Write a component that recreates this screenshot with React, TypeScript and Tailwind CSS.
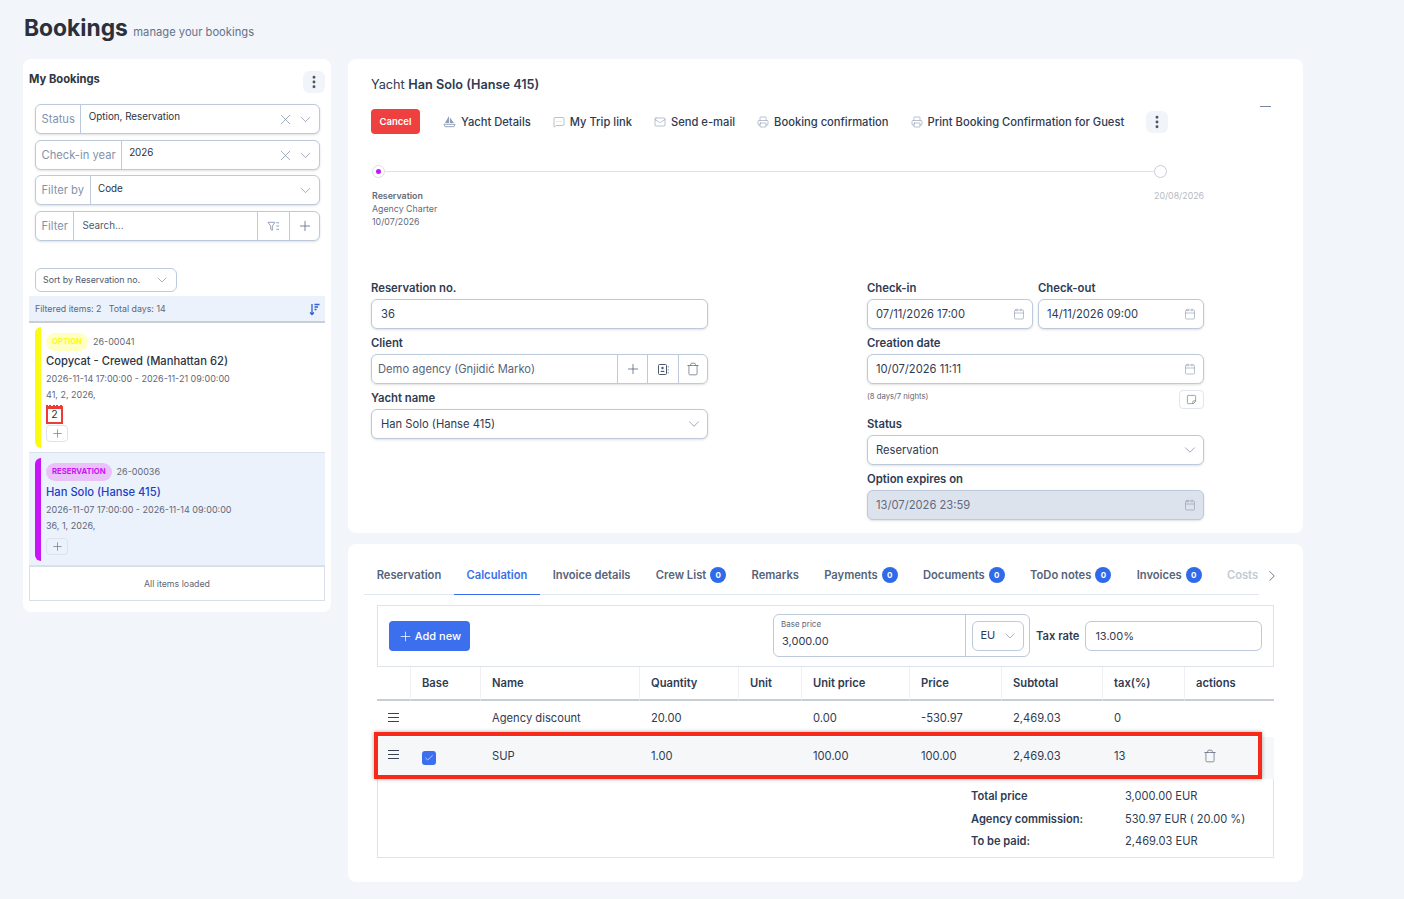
import React from "react";
import {
  Calendar,
  Check,
  ChevronDown,
  ChevronRight,
  EllipsisVertical,
  Mail,
  MessageSquareMore,
  Plus,
  Printer,
  StickyNote,
  Trash,
  X,
} from "lucide-react";

const Kebab = () => (
  <button className="flex h-[22px] w-[22px] items-center justify-center rounded-md bg-[#f1f4f8] text-[#4b5563]">
    <EllipsisVertical size={16} strokeWidth={2.4} />
  </button>
);

const SailIcon = () => (
  <svg width="13" height="13" viewBox="0 0 14 14" fill="#8f9cb5">
    <path d="M6.4 1 L6.4 8.6 L2.2 8.6 Z" />
    <path d="M7.4 2.8 L11.8 8.6 L7.4 8.6 Z" />
    <path d="M1 10 H13 L11.8 12.6 H2.2 Z" fill="none" stroke="#8f9cb5" strokeWidth="1" />
  </svg>
);

const FilterListIcon = () => (
  <svg width="13" height="13" viewBox="0 0 14 14" fill="none" stroke="#8f9cb5" strokeWidth="1">
    <path d="M1 2.5 H8.5 L5.8 6.5 V11 L4 10 V6.5 Z" />
    <path d="M10 3 H13 M10 6.5 H13 M10 10 H13" />
  </svg>
);

const SortIcon = () => (
  <svg width="11" height="13" viewBox="0 0 11 13" fill="none" stroke="#2f5fd0" strokeWidth="1.3">
    <path d="M3 1 V11.5 M1 9.5 L3 11.5 L5 9.5" />
    <path d="M5.5 1.5 H10.5 M5.5 4 H9 M5.5 6.5 H7.5" />
  </svg>
);

const ContactIcon = () => (
  <svg width="13" height="13" viewBox="0 0 13 13" fill="none" stroke="#4d586d" strokeWidth="1">
    <rect x="1.5" y="1.5" width="8" height="10" rx="1" />
    <circle cx="5.5" cy="5" r="1.2" fill="#4d586d" stroke="none" />
    <path d="M3.3 9 C3.6 7.2 7.4 7.2 7.7 9 Z" fill="#4d586d" stroke="none" />
    <path d="M11.2 3 V4.5 M11.2 6 V7.5 M11.2 9 V10.5" stroke="#8b98ae" />
  </svg>
);

const HandleIcon = () => (
  <svg width="11" height="9" viewBox="0 0 11 9" fill="none" stroke="#3a4354" strokeWidth="1">
    <path d="M0 .5 H11 M0 4.5 H11 M0 8.5 H11" />
  </svg>
);

// red calendar badge, the teeth sit on the top edge
const CalendarCount = ({ n }: { n: number }) => (
  <div className="relative mt-[4px] flex h-[18px] w-[17px] items-center justify-center border-2 border-t-[3px] border-[#ef3b36] text-[10.5px] leading-none text-[#2b3445]">
    {n}
    <span className="absolute left-[-2px] right-[-2px] top-[-4px] h-[2px] bg-[repeating-linear-gradient(90deg,#ef3b36_0_2px,transparent_2px_3.4px)]" />
  </div>
);

const FilterRow = ({
  label,
  value,
  clear,
  valueClass,
  className = "",
}: {
  label: string;
  value: string;
  clear?: boolean;
  valueClass: string;
  className?: string;
}) => (
  <div className={`flex h-[30px] items-stretch rounded-md border border-[#bccadb] bg-white shadow-sm ${className}`}>
    <span className="flex items-center border-r border-[#bccadb] px-[5.5px] text-[11.2px] text-[#8392ab]">{label}</span>
    <span className={`flex-1 pt-[5px] text-[9.8px] text-[#2b3445] ${valueClass}`}>{value}</span>
    {clear && <X size={17} strokeWidth={1} className="mr-[3px] self-center text-[#7f8ca3]" />}
    <ChevronDown size={17} strokeWidth={1} className="mr-[5px] self-center text-[#7f8ca3]" />
  </div>
);

const BookingCard = ({
  active,
  barClass,
  badge,
  badgeClass,
  code,
  title,
  dates,
  meta,
  children,
}: {
  active?: boolean;
  barClass: string;
  badge: string;
  badgeClass: string;
  code: string;
  title: string;
  dates: string;
  meta: string;
  children?: React.ReactNode;
}) => (
  <div className={`flex gap-[5px] px-[6px] ${active ? "border-y border-[#d8e2ef] bg-[#ebf2fc] pt-[5px] pb-[4px]" : "pt-[5px] pb-[4px]"}`}>
    <div className={`w-[6px] shrink-0 rounded-l-md ${barClass} ${active ? "" : "-mt-px"}`} />
    <div className="flex-1 pt-[5px] pb-[6px]">
      <div className="flex items-center gap-[5px]">
        <span className={`rounded-full px-[6px] py-[2px] text-[7.7px] font-bold leading-[14px] ${badgeClass}`}>{badge}</span>
        <span className="text-[9px] text-[#5f6777]">{code}</span>
      </div>
      <div className={`text-[11.2px] font-medium leading-[18px] ${active ? "mt-[2px] text-[#1d3fc4]" : "mt-[1px] text-[#2b3445]"}`}>{title}</div>
      <div className="mt-[2px] text-[9px] leading-[14px] text-[#5f6777]">{dates}</div>
      <div className="mt-[2px] text-[9px] leading-[14px] text-[#5f6777]">{meta}</div>
      {children}
      <button className={`flex h-[17px] w-[22px] items-center justify-center rounded border border-[#dde3ec] text-[#6b7689] ${active ? "mt-[5px]" : "mt-[1px]"}`}>
        <Plus size={13} strokeWidth={1.3} />
      </button>
    </div>
  </div>
);

const Sidebar = () => (
  <aside className="w-[308px] shrink-0 self-start rounded-lg bg-white px-[6px] pt-[12px] pb-[11px]">
    <div className="flex items-start justify-between">
      <h2 className="text-[11.2px] font-bold leading-[16px] text-[#2f3441]">My Bookings</h2>
      <Kebab />
    </div>
    <div className="mt-[11px] flex flex-col gap-[6px] pl-[6px] pr-[5px]">
      <FilterRow label="Status" value="Option, Reservation" clear valueClass="pl-[7.5px]" />
      <FilterRow label="Check-in year" value="2026" clear valueClass="pl-[7px]" />
      <FilterRow label="Filter by" value="Code" valueClass="translate-y-px pl-[7.5px]" className="-mt-px" />
      <div className="flex h-[30px] items-stretch rounded-md border border-[#bccadb] bg-white shadow-sm">
        <span className="flex items-center border-r border-[#bccadb] px-[5.5px] text-[11.2px] text-[#8392ab]">Filter</span>
        <span className="flex flex-1 items-center pl-[8px] pt-px text-[9.8px] text-[#4d586d]">Search...</span>
        <span className="flex w-[32px] items-center justify-center border-l border-[#bccadb]">
          <FilterListIcon />
        </span>
        <span className="flex w-[30px] items-center justify-center border-l border-[#bccadb] text-[#5c6a82]">
          <Plus size={16} strokeWidth={1.2} />
        </span>
      </div>
    </div>
    <div className="mt-[27px] ml-[6px] flex h-[24px] w-[142px] items-center justify-between rounded-md border border-[#bccadb] pl-[7px] pr-[6px] text-[8.8px] text-[#4d586d]">
      Sort by Reservation no.
      <ChevronDown size={16} strokeWidth={1} className="text-[#7f8ca3]" />
    </div>
    <div className="mt-[4px] flex h-[27px] items-center justify-between border-b-2 border-[#c9ced6] bg-[#ebf2fc] pl-[6px] pr-[5px] pt-[1px] text-[8.8px] text-[#5f6777]">
      <span>Filtered items: 2&nbsp;&nbsp;&nbsp;Total days: 14</span>
      <SortIcon />
    </div>
    <BookingCard
      barClass="bg-[#fbfb12]"
      badge="OPTION"
      badgeClass="bg-[#ffffc2] text-[#f9f92a]"
      code="26-00041"
      title="Copycat - Crewed (Manhattan 62)"
      dates="2026-11-14 17:00:00 - 2026-11-21 09:00:00"
      meta="41, 2, 2026,"
    >
      <CalendarCount n={2} />
    </BookingCard>
    <BookingCard
      active
      barClass="bg-[#c815f5]"
      badge="RESERVATION"
      badgeClass="bg-[#e8c2f8] text-[#c815f5]"
      code="26-00036"
      title="Han Solo (Hanse 415)"
      dates="2026-11-07 17:00:00 - 2026-11-14 09:00:00"
      meta="36, 1, 2026,"
    />
    <div className="flex h-[35px] items-center justify-center border border-[#d8deea] text-[8.8px] text-[#5f6777]">All items loaded</div>
  </aside>
);

const ActionLink = ({ icon, label }: { icon: React.ReactNode; label: string }) => (
  <span className="flex items-center gap-[5px] text-[11.2px] font-medium text-[#2f3b52]">
    {icon}
    {label}
  </span>
);

const Label = ({ children }: { children: React.ReactNode }) => (
  <label className="mb-[4px] block text-[11.3px] font-semibold leading-[14px] text-[#2f3b52]">{children}</label>
);

const Field = ({
  value,
  icon,
  disabled,
  padClass = "pl-[9px]",
}: {
  value: string;
  icon?: React.ReactNode;
  disabled?: boolean;
  padClass?: string;
}) => (
  <div
    className={`flex h-[30px] items-center justify-between rounded-md border border-[#bccadb] pr-[7px] text-[11.2px] shadow-sm ${padClass} ${
      disabled ? "bg-[#dde3ec] text-[#5f6b80]" : "bg-white text-[#2f3b52]"
    }`}
  >
    {value}
    {icon}
  </div>
);

const Cal = () => <Calendar size={12} strokeWidth={1.2} className="text-[#8b98ae]" />;
const Chev = () => <ChevronDown size={18} strokeWidth={1} className="-mr-[3px] text-[#7f8ca3]" />;

const BookingDetails = () => (
  <section className="h-[474px] rounded-lg bg-white pl-[23px] pr-[30px] pt-[18px]">
    <h1 className="text-[12.7px] leading-[16px] text-[#2f3b52]">
      Yacht <strong className="font-semibold">Han Solo (Hanse 415)</strong>
    </h1>
    <div className="relative mt-[16px] flex items-center">
      <button className="flex h-[25px] w-[49px] items-center justify-center rounded bg-[#ef4040] pt-px text-[9.5px] font-semibold text-white">Cancel</button>
      <div className="ml-[23px] mt-px flex items-center gap-[22px]">
        <ActionLink icon={<SailIcon />} label="Yacht Details" />
        <ActionLink icon={<MessageSquareMore size={12} strokeWidth={1.2} className="text-[#8b98ae]" />} label="My Trip link" />
        <ActionLink icon={<Mail size={12} strokeWidth={1.2} className="text-[#8b98ae]" />} label="Send e-mail" />
        <ActionLink icon={<Printer size={12} strokeWidth={1.2} className="text-[#8b98ae]" />} label="Booking confirmation" />
        <ActionLink icon={<Printer size={12} strokeWidth={1.2} className="text-[#8b98ae]" />} label="Print Booking Confirmation for Guest" />
      </div>
      <div className="ml-[22px]">
        <Kebab />
      </div>
      <span className="absolute right-[2px] top-[-3px] h-px w-[11px] bg-[#7a879c]" />
    </div>
    <div className="mt-[31px] w-[833px]">
      <div className="flex items-center pl-[1px] pr-[37px]">
        <span className="flex h-[13px] w-[13px] shrink-0 items-center justify-center rounded-full border border-[#d8deea]">
          <span className="h-[5px] w-[5px] rounded-full bg-[#c815f5]" />
        </span>
        <span className="h-px flex-1 bg-[#dde2ec]" />
        <span className="h-[13px] w-[13px] shrink-0 rounded-full border border-[#c5ccd9]" />
      </div>
      <div className="mt-[11px] flex justify-between pl-px text-[8.8px] leading-[13px] text-[#646c7a]">
        <div>
          <div className="font-semibold">Reservation</div>
          <div>Agency Charter</div>
          <div>10/07/2026</div>
        </div>
        <div className="text-[#b6bac2]">20/08/2026</div>
      </div>
    </div>
    <div className="mt-[53px] flex w-[833px] justify-between">
      <div className="w-[337px]">
        <Label>Reservation no.</Label>
        <Field value="36" />
        <div className="mt-[7px]">
          <Label>Client</Label>
        </div>
        <div className="flex h-[30px] items-stretch rounded-md border border-[#bccadb] text-[#4d586d] shadow-sm">
          <span className="flex flex-1 items-center pl-[6px] text-[11.2px] text-[#59647a]">Demo agency (Gnjidić Marko)</span>
          <span className="flex w-[30px] items-center justify-center border-l border-[#bccadb]">
            <Plus size={16} strokeWidth={1.1} />
          </span>
          <span className="flex w-[31px] items-center justify-center border-l border-[#bccadb]">
            <ContactIcon />
          </span>
          <span className="flex w-[29px] items-center justify-center border-l border-[#bccadb]">
            <Trash size={14} strokeWidth={1.1} />
          </span>
        </div>
        <div className="mt-[7px]">
          <Label>Yacht name</Label>
        </div>
        <Field value="Han Solo (Hanse 415)" icon={<Chev />} />
      </div>
      <div className="w-[337px]">
        <div className="flex gap-[5px]">
          <div className="w-[166px]">
            <Label>Check-in</Label>
            <Field value="07/11/2026 17:00" icon={<Cal />} padClass="pl-[8px]" />
          </div>
          <div className="flex-1">
            <Label>Check-out</Label>
            <Field value="14/11/2026 09:00" icon={<Cal />} padClass="pl-[8px]" />
          </div>
        </div>
        <div className="mt-[7px]">
          <Label>Creation date</Label>
        </div>
        <Field value="10/07/2026 11:11" icon={<Cal />} padClass="pl-[8px]" />
        <div className="mt-[6px] flex items-start justify-between">
          <span className="pt-px text-[7.7px] leading-[11px] text-[#5f6777]">(8 days/7 nights)</span>
          <button className="flex h-[19px] w-[25px] items-center justify-center rounded border border-[#e2e6ee] text-[#4d586d]">
            <StickyNote size={11} strokeWidth={1.2} className="-scale-y-100" />
          </button>
        </div>
        <div className="mt-[8px]">
          <Label>Status</Label>
        </div>
        <Field value="Reservation" icon={<Chev />} padClass="pl-[8px]" />
        <div className="mt-[7px]">
          <Label>Option expires on</Label>
        </div>
        <Field value="13/07/2026 23:59" icon={<Cal />} disabled padClass="pl-[8px]" />
      </div>
    </div>
  </section>
);

const tabs = [
  { label: "Reservation" },
  { label: "Calculation", active: true },
  { label: "Invoice details" },
  { label: "Crew List", count: 0 },
  { label: "Remarks" },
  { label: "Payments", count: 0 },
  { label: "Documents", count: 0 },
  { label: "ToDo notes", count: 0 },
  { label: "Invoices", count: 0 },
];

const gridCols = "grid grid-cols-[33px_70px_159px_99px_63px_108px_92px_101px_82px_90px]";

const headers = ["", "Base", "Name", "Quantity", "Unit", "Unit price", "Price", "Subtotal", "tax(%)", "actions"];

const Calculation = () => (
  <section className="h-[338px] rounded-lg bg-white pl-[16px] pr-[29px] pt-[14px]">
    <div className="relative flex h-[37px] w-[895px] items-start border-b border-[#e3e7ef]">
      {tabs.map((t) => (
        <div
          key={t.label}
          className={`flex h-[37px] shrink-0 items-center gap-[4px] whitespace-nowrap border-b px-[12.65px] pb-[2px] text-[11.2px] font-semibold ${
            t.active ? "border-[#3b6fe8] text-[#3b6fe8]" : "border-transparent text-[#56637a]"
          }`}
        >
          {t.label}
          {t.count !== undefined && (
            <span className="flex h-[16px] w-[16px] items-center justify-center rounded-full bg-[#2f6be8] text-[8px] font-bold text-white">{t.count}</span>
          )}
        </div>
      ))}
      <div className="flex h-[37px] items-center pl-[12.5px] pb-[3px] text-[11.2px] font-semibold text-[#c2c9d4]">Costs</div>
      <ChevronRight size={18} strokeWidth={1.2} className="absolute right-[-22px] top-[9px] text-[#5c6a82]" />
    </div>
    <div className="ml-[13px] mt-[10px] w-[897px]">
      <div className="flex h-[62px] items-center border border-[#dde2ec] pl-[11px] pr-[11px]">
        <button className="flex h-[30px] w-[81px] shrink-0 items-center justify-center gap-[2px] rounded bg-[#3b6fee] text-[11px] font-medium text-white">
          <Plus size={15} strokeWidth={1.2} />
          Add new
        </button>
        <div className="ml-[303px] -mt-px flex h-[43px] w-[257px] shrink-0 rounded-md border border-[#bccadb]">
          <div className="flex-1 pl-[7px] pt-[3px]">
            <div className="text-[8px] leading-[12px] text-[#5f6777]">Base price</div>
            <div className="mt-[3px] pl-px text-[11px] leading-[16px] text-[#2f3b52]">3,000.00</div>
          </div>
          <div className="flex w-[64px] items-center justify-center border-l border-[#bccadb]">
            <div className="flex h-[30px] w-[52px] items-center justify-between rounded-md border border-[#bccadb] pl-[8px] pr-[5px] text-[11px] text-[#2f3b52]">
              EU
              <ChevronDown size={16} strokeWidth={1} className="text-[#7f8ca3]" />
            </div>
          </div>
        </div>
        <span className="ml-[6px] whitespace-nowrap text-[11.2px] font-semibold text-[#2f3b52]">Tax rate</span>
        <div className="ml-[6px] flex h-[30px] w-[177px] shrink-0 items-center rounded-md border border-[#bccadb] pl-[9px] text-[11px] text-[#2f3b52]">13.00%</div>
      </div>
      <div className={`${gridCols} h-[34px]`}>
        {headers.map((h, i) => (
          <div
            key={i}
            className="flex items-center border-b-2 border-l border-b-[#c9ced6] border-l-[#eef0f4] pl-[11px] text-[11.2px] font-semibold text-[#2f3b52] first:border-l-0"
          >
            {h}
          </div>
        ))}
      </div>
      <div className={`${gridCols} h-[36px] items-center pb-[2px] text-[11.2px] text-[#2f3b52]`}>
        <span className="pl-[11px]">
          <span className="-mt-[1px] block w-[11px]">
            <HandleIcon />
          </span>
        </span>
        <span />
        <span className="pl-[12px]">Agency discount</span>
        <span className="pl-[12px]">20.00</span>
        <span />
        <span className="pl-[12px]">0.00</span>
        <span className="pl-[12px]">-530.97</span>
        <span className="pl-[12px]">2,469.03</span>
        <span className="pl-[12px]">0</span>
        <span />
      </div>
      <div className={`${gridCols} relative h-[42px] items-center bg-[#f6f7f9] pb-[4px] text-[11.2px] text-[#2f3b52]`}>
        <span className="pl-[11px]">
          <span className="-mt-[3px] block w-[11px]">
            <HandleIcon />
          </span>
        </span>
        <span className="pl-[12px] pt-[4px]">
          <span className="flex h-[14px] w-[14px] items-center justify-center rounded-[3px] bg-[#3b6fee] text-white">
            <Check size={10} strokeWidth={1.5} />
          </span>
        </span>
        <span className="pl-[12px]">SUP</span>
        <span className="pl-[12px]">1.00</span>
        <span />
        <span className="pl-[12px]">100.00</span>
        <span className="pl-[12px]">100.00</span>
        <span className="pl-[12px]">2,469.03</span>
        <span className="pl-[12px]">13</span>
        <span className="pl-[19px]">
          <Trash size={14} strokeWidth={1.1} className="text-[#4d586d]" />
        </span>
        {/* red annotation drawn over the row */}
        <div className="absolute left-[-3px] top-[-5px] h-[47px] w-[888px] border-[4px] border-[#f7291b] shadow-[0_0_4px_rgba(0,0,0,0.35)]" />
      </div>
      <div className="flex h-[79px] justify-end whitespace-nowrap border border-t-0 border-[#dde2ec] pr-[28px] pt-[6px] text-[11.1px] leading-[22.5px] text-[#2f3b52]">
        <div className="w-[154px] font-semibold">
          <div>Total price</div>
          <div>Agency commission:</div>
          <div>To be paid:</div>
        </div>
        <div className="w-[120px]">
          <div>3,000.00 EUR</div>
          <div>530.97 EUR ( 20.00 %)</div>
          <div>2,469.03 EUR</div>
        </div>
      </div>
    </div>
  </section>
);

export default function App() {
  return (
    <div className="min-h-[899px] bg-[#f2f5f9] pl-[23px] pr-[101px] pt-[14px] font-['Inter',sans-serif]">
      <header className="flex h-[45px] items-baseline gap-[5.5px] pl-px">
        <span className="text-[22.8px] font-bold leading-[28px] text-[#2b303b]">Bookings</span>
        <span className="text-[11.2px] text-[#667189]">manage your bookings</span>
      </header>
      <div className="flex gap-[17px]">
        <Sidebar />
        <div className="flex w-[955px] flex-col gap-[11px]">
          <BookingDetails />
          <Calculation />
        </div>
      </div>
    </div>
  );
}
